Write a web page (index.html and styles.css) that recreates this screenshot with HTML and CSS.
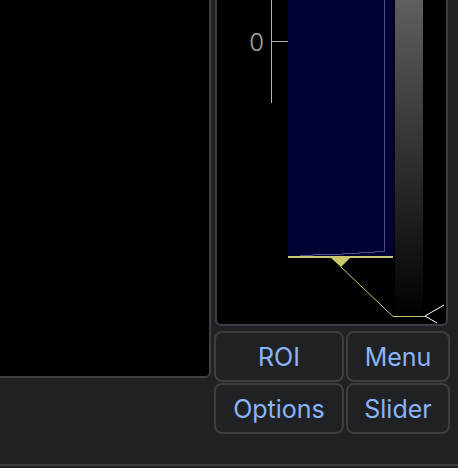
FILE: index.html
```html
<!DOCTYPE html>
<html>
<head>
<meta charset="utf-8">
<link rel="stylesheet" href="styles.css">
</head>
<body>
<div class="app">
  <div class="main">
    <div class="viewer"></div>
    <div class="side">
      <div class="plot">
        <svg class="plot-svg" viewBox="217 -18 229 342" width="229" height="342">
          <defs>
            <linearGradient id="cbar" gradientUnits="userSpaceOnUse" x1="0" y1="-18" x2="0" y2="318">
              <stop offset="0" stop-color="#646464"/>
              <stop offset="1" stop-color="#000000"/>
            </linearGradient>
          </defs>
          <text class="axis-label" x="264" y="50.5" text-anchor="end">0</text>
          <line x1="271.5" y1="-18" x2="271.5" y2="103" class="axis"/>
          <line x1="272" y1="41.5" x2="288" y2="41.5" class="axis"/>
          <rect x="288" y="-18" width="106" height="274" fill="#000033"/>
          <polyline class="hist" points="384.5,-18 384.5,251.5 375,251.5 375,252.5 359,252.5 359,253.5 343,253.5 343,254.5 313,254.5 313,255.5 300,255.5"/>
          <rect x="395" y="-18" width="28" height="336" fill="url(#cbar)"/>
          <rect x="288" y="256" width="105" height="2" fill="#c8c86a"/>
          <polygon points="331,258 350,258 341,267" fill="#c8c86a"/>
          <polyline class="yl" points="341,267 393,316.5 425,316.5"/>
          <polyline class="wl" points="444,305 425,316 437,323"/>
        </svg>
      </div>
      <div class="buttons">
        <button class="btn">ROI</button>
        <button class="btn">Menu</button>
        <button class="btn">Options</button>
        <button class="btn">Slider</button>
      </div>
    </div>
  </div>
  <div class="footer"></div>
</div>
</body>
</html>
```
FILE: styles.css
```css
html, body {
  margin: 0;
  padding: 0;
  background: #202124;
  overflow: hidden;
}
.app {
  width: 458px;
  height: 468px;
  display: flex;
  flex-direction: column;
}
.main {
  display: flex;
  height: 464px;
}
.viewer {
  flex: none;
  width: 231px;
  height: 398px;
  margin-left: -20px;
  margin-top: -20px;
  box-sizing: border-box;
  background: #000;
  border: 2px solid #3d3e42;
  border-radius: 6px;
}
.side {
  flex: none;
  margin-left: 3px;
  width: 236px;
  display: flex;
  flex-direction: column;
}
.plot {
  position: relative;
  margin-top: -20px;
  margin-left: 1px;
  width: 233px;
  height: 346px;
  box-sizing: border-box;
  background: #000;
  border: 2px solid #3d3e42;
  border-radius: 6px;
  overflow: hidden;
}
.plot-svg {
  display: block;
}
.axis {
  stroke: #b4b4b4;
  stroke-width: 1;
}
.axis-label {
  fill: #a8a8a8;
  font-family: "Inter", "Liberation Sans", sans-serif;
  font-size: 24px;
  font-weight: 300;
}
.hist {
  fill: none;
  stroke: #4e4e8c;
  stroke-width: 1;
}
.yl {
  fill: none;
  stroke: #c8c86a;
  stroke-width: 1;
}
.wl {
  fill: none;
  stroke: #ffffff;
  stroke-width: 1;
}
.buttons {
  margin-top: 5px;
  display: grid;
  grid-template-columns: 130px 104px;
  grid-auto-rows: 51px;
  column-gap: 2px;
  row-gap: 1px;
}
.btn {
  margin: 0;
  padding: 0;
  box-sizing: border-box;
  background: #202124;
  border: 2px solid #3d3e42;
  border-radius: 8px;
  color: #8ab4f8;
  font-family: "Inter", "Liberation Sans", sans-serif;
  font-size: 25px;
  font-weight: 400;
}
.footer {
  height: 4px;
  border-top: 2px solid #3d3e42;
  box-sizing: border-box;
}
```
